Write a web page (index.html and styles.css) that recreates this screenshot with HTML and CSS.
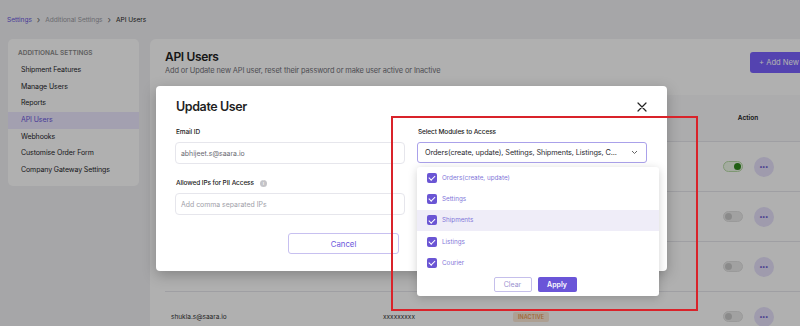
FILE: index.html
```html
<!DOCTYPE html>
<html lang="en">
<head>
  <meta charset="UTF-8" />
  <title>API Users</title>
  <link rel="stylesheet" href="styles.css">
</head>
<body>
  <div class="page">
    <nav class="crumbs">
      <span class="crumb-link">Settings</span>
      <span class="sep">&#x203A;</span>
      <span class="crumb-muted">Additional Settings</span>
      <span class="sep">&#x203A;</span>
      <span class="crumb-current">API Users</span>
    </nav>

    <div class="layout">
      <aside class="side">
        <p class="side-title">ADDITIONAL SETTINGS</p>
        <div class="side-item">Shipment Features</div>
        <div class="side-item">Manage Users</div>
        <div class="side-item">Reports</div>
        <div class="side-item active">API Users</div>
        <div class="side-item">Webhooks</div>
        <div class="side-item">Customise Order Form</div>
        <div class="side-item">Company Gateway Settings</div>
      </aside>

      <main class="main">
        <div class="main-head">
          <div>
            <h1>API Users</h1>
            <p class="sub">Add or Update new API user, reset their password or make user active or Inactive</p>
          </div>
          <button class="add-btn">+ Add New</button>
        </div>

        <div class="table">
          <div class="row head">
            <div class="cell">Email ID</div>
            <div class="cell">Password</div>
            <div class="cell">Status</div>
            <div class="cell"></div>
            <div class="cell act">Action</div>
          </div>
          <div class="row">
            <div class="cell">abhijeet.s@saara.io</div>
            <div class="cell">xxxxxxxxx</div>
            <div class="cell"><span class="badge on">ACTIVE</span></div>
            <div class="cell"></div>
            <div class="cell act"><span class="toggle on"></span><span class="dots">&bull;&bull;&bull;</span></div>
          </div>
          <div class="row">
            <div class="cell">rahul.k@saara.io</div>
            <div class="cell">xxxxxxxxx</div>
            <div class="cell"><span class="badge">INACTIVE</span></div>
            <div class="cell"></div>
            <div class="cell act"><span class="toggle"></span><span class="dots">&bull;&bull;&bull;</span></div>
          </div>
          <div class="row">
            <div class="cell">priya.m@saara.io</div>
            <div class="cell">xxxxxxxxx</div>
            <div class="cell"><span class="badge">INACTIVE</span></div>
            <div class="cell"></div>
            <div class="cell act"><span class="toggle"></span><span class="dots">&bull;&bull;&bull;</span></div>
          </div>
          <div class="row">
            <div class="cell">shukla.s@saara.io</div>
            <div class="cell">xxxxxxxxx</div>
            <div class="cell"><span class="badge">INACTIVE</span></div>
            <div class="cell"></div>
            <div class="cell act"><span class="toggle"></span><span class="dots">&bull;&bull;&bull;</span></div>
          </div>
        </div>
      </main>
    </div>
  </div>

  <div class="overlay"></div>

  <div class="modal">
    <div class="modal-head">
      <h2>Update User</h2>
      <svg class="close" width="10" height="10" viewBox="0 0 10 10">
        <path d="M1 1L9 9M9 1L1 9" stroke="#222" stroke-width="1.2" stroke-linecap="round" />
      </svg>
    </div>

    <div class="form-grid">
      <div class="field">
        <label>Email ID</label>
        <div class="input">abhijeet.s@saara.io</div>
        <label class="second">Allowed IPs for PII Access <span class="info">i</span></label>
        <div class="input placeholder">Add comma separated IPs</div>
        <div class="btn-row">
          <button class="cancel">Cancel</button>
        </div>
      </div>

      <div class="field">
        <label>Select Modules to Access</label>
        <div class="select-wrap">
          <div class="select">
            <span>Orders(create, update), Settings, Shipments, Listings, C...</span>
            <svg width="7" height="5" viewBox="0 0 7 5">
              <path d="M1 1L3.5 3.5L6 1" fill="none" stroke="#666" stroke-width="1" />
            </svg>
          </div>
          <div class="dropdown">
            <div class="opt"><span class="check"></span>Orders(create, update)</div>
            <div class="opt"><span class="check"></span>Settings</div>
            <div class="opt hover"><span class="check"></span>Shipments</div>
            <div class="opt"><span class="check"></span>Listings</div>
            <div class="opt"><span class="check"></span>Courier</div>
            <div class="drop-actions">
              <button class="clear">Clear</button>
              <button class="apply">Apply</button>
            </div>
          </div>
        </div>
      </div>
    </div>
  </div>

  <div class="mark"></div>
</body>
</html>
```

FILE: styles.css
```css
:root {
  --purple: #6b56dc;
  --purple-soft: #8276d9;
  --text-dark: #1f1f24;
  --text-light: #8c8c96;
  --line: #e6e6ec;
}
* { box-sizing: border-box; }
body {
  margin: 0;
  width: 800px;
  height: 326px;
  overflow: hidden;
  font-family: 'Inter', 'Liberation Sans', sans-serif;
  background: #f1f1f4;
  color: var(--text-dark);
  position: relative;
}
button { font-family: inherit; cursor: pointer; white-space: nowrap; }

/* page behind the modal */
.crumbs {
  height: 39px;
  display: flex;
  align-items: center;
  gap: 3px;
  padding: 0 0 0 7px;
  font-size: 6.6px;
  letter-spacing: -0.05px;
}
.crumb-link { color: var(--purple); }
.crumb-muted { color: #9a9aa2; }
.crumb-current { color: var(--text-dark); }
.sep { color: #666; font-size: 9px; margin: 0 2px; }

.layout {
  display: flex;
  align-items: flex-start;
  gap: 11px;
  padding-left: 8px;
}
.side {
  width: 131px;
  flex: none;
  background: #fff;
  border-radius: 5px;
  padding: 8px 0 7px;
}
.side-title {
  margin: 0 0 3px;
  padding-left: 10px;
  font-size: 6.5px;
  line-height: 12px;
  font-weight: 600;
  color: #8a8a8a;
}
.side-item {
  height: 16.7px;
  line-height: 16.7px;
  padding-left: 13px;
  font-size: 7px;
  letter-spacing: -0.1px;
  color: #26262b;
}
.side-item.active {
  background: #ece8ff;
  color: var(--purple);
}

.main {
  width: 680px;
  flex: none;
  background: #fff;
  border-radius: 6px 0 0 0;
  padding: 9px 15px 0;
  min-height: 300px;
}
.main-head {
  display: flex;
  justify-content: space-between;
  align-items: flex-start;
}
.main-head h1 {
  margin: 0;
  font-size: 12px;
  line-height: 18px;
  font-weight: 600;
  letter-spacing: -0.35px;
}
.main-head .sub {
  margin: 0;
  font-size: 7.4px;
  line-height: 10px;
  letter-spacing: -0.1px;
  color: #707078;
}
.add-btn {
  margin-top: 4px;
  width: 65px;
  height: 21px;
  border: none;
  border-radius: 3px;
  background: #7a62ff;
  color: #fff;
  font-size: 7.6px;
  text-align: left;
  padding-left: 9px;
}

.table { margin-top: 19px; }
.row {
  display: grid;
  grid-template-columns: 212px 130px 130px 78px 66px 1fr;
  align-items: center;
  height: 50px;
  border-top: 1px solid var(--line);
  font-size: 6.5px;
  color: #333;
}
.row.head {
  height: 46px;
  border-top: none;
  background: #fafafb;
  font-weight: 600;
  color: #222;
}
.cell { padding: 0 6px; }
.cell.act {
  display: flex;
  justify-content: center;
  align-items: center;
  gap: 11px;
  padding: 0;
}
.badge {
  display: inline-block;
  padding: 2px 5px;
  border-radius: 2px;
  background: #fbe8d6;
  color: #e99a55;
  font-size: 5.5px;
  font-weight: 600;
}
.badge.on { background: #dff3e4; color: #2e9b52; }
.toggle {
  width: 20px;
  height: 11px;
  border-radius: 6px;
  background: #eaeaea;
  border: 1px solid #e0e0e0;
  position: relative;
}
.toggle::after {
  content: "";
  position: absolute;
  top: 1px;
  left: 1px;
  width: 7px;
  height: 7px;
  border-radius: 50%;
  background: #c9c9c9;
}
.toggle.on { background: #eef8e8; border-color: #b9dca8; }
.toggle.on::after { left: 10px; background: #2f8a1c; }
.dots {
  width: 20px;
  height: 20px;
  border-radius: 50%;
  background: #e6e1fb;
  color: #5a48c8;
  font-size: 6px;
  letter-spacing: -0.5px;
  display: flex;
  align-items: center;
  justify-content: center;
}

.overlay {
  position: absolute;
  inset: 0;
  background: rgba(0, 0, 0, 0.31);
  z-index: 10;
}

/* modal */
.modal {
  position: absolute;
  left: 156px;
  top: 86px;
  width: 511px;
  height: 185px;
  background: #fff;
  border-radius: 4px;
  box-shadow: 0 4px 14px rgba(0, 0, 0, 0.25);
  padding: 12px 20px 0 19px;
  z-index: 20;
}
.modal-head {
  display: flex;
  justify-content: space-between;
  align-items: center;
}
.modal-head h2 {
  margin: 0;
  font-size: 12.5px;
  line-height: 18px;
  font-weight: 600;
  letter-spacing: -0.4px;
  padding-left: 1px;
}
.form-grid {
  display: grid;
  grid-template-columns: 230px 230px;
  column-gap: 12px;
  margin-top: 10px;
}
.field label {
  display: flex;
  align-items: center;
  gap: 4px;
  font-size: 6.5px;
  line-height: 12px;
  font-weight: 500;
  letter-spacing: -0.1px;
  color: #222;
  margin-bottom: 4px;
  padding-left: 1px;
}
.field label.second { margin-top: 13px; }
.info {
  width: 7px;
  height: 7px;
  border-radius: 50%;
  background: #c4c4c8;
  color: #fff;
  font-size: 5px;
  line-height: 7px;
  text-align: center;
  margin-left: 2px;
}
.input {
  height: 22px;
  border: 1px solid var(--line);
  border-radius: 4px;
  padding: 0 5px;
  display: flex;
  align-items: center;
  font-size: 6.9px;
  color: #6a6a72;
}
.input.placeholder { color: #a0a0a8; }
.btn-row {
  display: flex;
  justify-content: flex-end;
  padding-right: 6px;
  margin-top: 18px;
}
.cancel {
  width: 111px;
  height: 21px;
  border: 1px solid #c7c0f0;
  border-radius: 3px;
  background: #fff;
  color: var(--purple);
  font-size: 7.8px;
}

.select-wrap { position: relative; }
.select {
  height: 21px;
  border: 1px solid #aaa1ea;
  border-radius: 3px;
  padding: 0 8px 0 7px;
  display: flex;
  justify-content: space-between;
  align-items: center;
  font-size: 7.3px;
  letter-spacing: -0.1px;
  white-space: nowrap;
  color: #2a2a2f;
}
.dropdown {
  position: absolute;
  top: 25px;
  left: 0;
  width: 242px;
  background: #fff;
  border-radius: 3px;
  box-shadow: 0 2px 10px rgba(0, 0, 0, 0.18);
  padding-bottom: 4px;
  z-index: 5;
}
.opt {
  height: 21.3px;
  display: flex;
  align-items: center;
  gap: 5px;
  padding-left: 10px;
  font-size: 6.3px;
  color: var(--purple-soft);
}
.opt.hover { background: #efedf8; }
.check {
  width: 10px;
  height: 10px;
  border-radius: 2px;
  background: #6a55d4;
  position: relative;
}
.check::after {
  content: "";
  position: absolute;
  left: 3.3px;
  top: 1.3px;
  width: 2.5px;
  height: 5px;
  border: solid #fff;
  border-width: 0 1.2px 1.2px 0;
  transform: rotate(45deg);
}
.drop-actions {
  display: flex;
  justify-content: center;
  gap: 6px;
  margin-top: 4px;
  padding-right: 6px;
}
.clear, .apply {
  height: 15px;
  border-radius: 2px;
  font-size: 7px;
  padding: 0;
}
.clear {
  width: 38px;
  border: 1px solid #c5bfeb;
  background: #fff;
  color: #9a92cf;
}
.apply {
  width: 39px;
  border: none;
  background: #6a55d8;
  color: #fff;
  font-weight: 600;
}

/* annotation box drawn on the screenshot */
.mark {
  position: absolute;
  left: 391px;
  top: 116px;
  width: 307px;
  height: 195px;
  border: 2px solid #d9232a;
  z-index: 30;
}
```
